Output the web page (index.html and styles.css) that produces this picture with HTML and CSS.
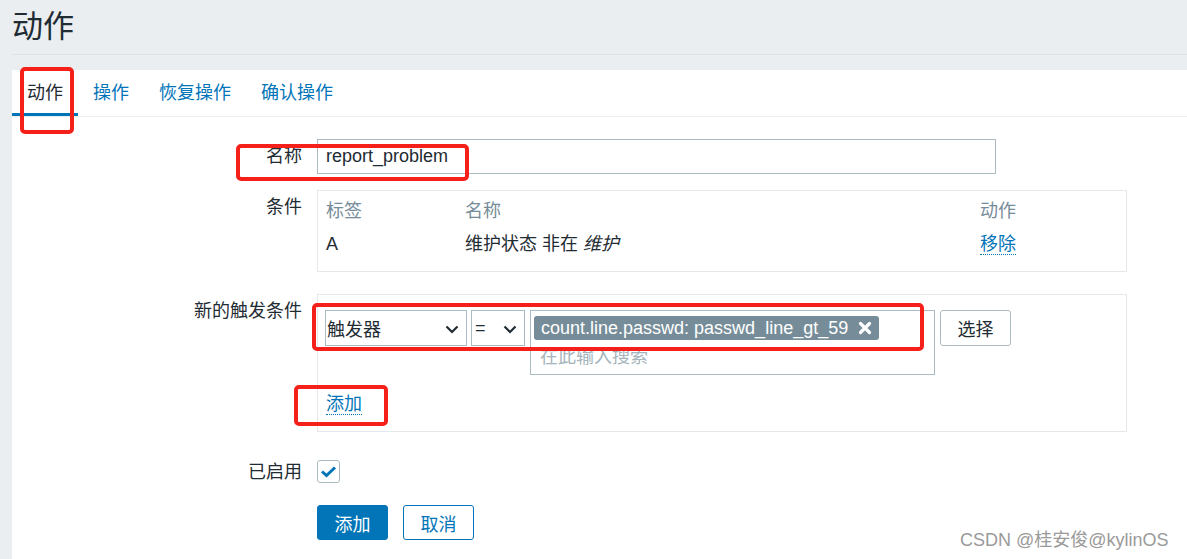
FILE: index.html
```html
<!DOCTYPE html>
<html lang="zh-CN">
<head>
  <meta charset="UTF-8" />
  <title>动作</title>
  <link rel="stylesheet" href="styles.css">
</head>
<body>
  <!-- Header -->
  <header class="page-header">
    <h1>动作</h1>
  </header>

  <!-- Main panel -->
  <main class="panel">
    <ul class="tabs">
      <li class="tab active">动作</li>
      <li class="tab">操作</li>
      <li class="tab">恢复操作</li>
      <li class="tab">确认操作</li>
    </ul>

    <div class="form">
      <div class="row">
        <label class="label">名称</label>
        <div class="field">
          <input class="text-input" type="text" value="report_problem" />
        </div>
      </div>

      <div class="row">
        <label class="label">条件</label>
        <div class="field">
          <div class="box conditions">
            <div class="cond-row head">
              <span class="c1">标签</span>
              <span class="c2">名称</span>
              <span class="c3">动作</span>
            </div>
            <div class="cond-row">
              <span class="c1">A</span>
              <span class="c2">维护状态 非在 <em>维护</em></span>
              <span class="c3"><a class="link">移除</a></span>
            </div>
          </div>
        </div>
      </div>

      <div class="row">
        <label class="label">新的触发条件</label>
        <div class="field">
          <div class="box new-cond">
            <div class="cond-controls">
              <div class="select sel-type">
                <span>触发器</span>
                <svg class="chev" width="14" height="9" viewBox="0 0 14 9"><path d="M1.5 1.5 L7 7 L12.5 1.5" fill="none" stroke="#1f2c33" stroke-width="2.2"/></svg>
              </div>
              <div class="select sel-op">
                <span>=</span>
                <svg class="chev" width="14" height="9" viewBox="0 0 14 9"><path d="M1.5 1.5 L7 7 L12.5 1.5" fill="none" stroke="#1f2c33" stroke-width="2.2"/></svg>
              </div>
              <div class="multiselect">
                <div class="chip">
                  <span>count.line.passwd: passwd_line_gt_59</span>
                  <svg class="chip-x" width="14" height="14" viewBox="0 0 14 14"><path d="M2.5 2.5 L11.5 11.5 M11.5 2.5 L2.5 11.5" stroke="#fff" stroke-width="3.2" stroke-linecap="round"/></svg>
                </div>
                <div class="placeholder">在此输入搜索</div>
              </div>
              <button class="btn-grey">选择</button>
            </div>
            <div class="add-line"><a class="link">添加</a></div>
          </div>
        </div>
      </div>

      <div class="row row-check">
        <label class="label">已启用</label>
        <div class="field">
          <span class="checkbox">
            <svg width="17" height="13" viewBox="0 0 17 13"><path d="M2 6.5 L6.5 10.5 L15 2.5" fill="none" stroke="#0275b8" stroke-width="3"/></svg>
          </span>
        </div>
      </div>

      <div class="row row-buttons">
        <div class="label"></div>
        <div class="field buttons">
          <button class="btn-primary">添加</button>
          <button class="btn-alt">取消</button>
        </div>
      </div>
    </div>
  </main>

  <!-- annotations -->
  <div class="mark mark-tab"></div>
  <div class="mark mark-name"></div>
  <div class="mark mark-cond"></div>
  <div class="mark mark-add"></div>

  <div class="watermark">CSDN @桂安俊@kylinOS</div>
</body>
</html>
```

FILE: styles.css
```css
body {
  margin: 0;
  padding: 0 0 0 12px;
  height: 559px;
  overflow: hidden;
  background-color: #ebeef1;
  font-family: "Liberation Sans", "Noto Sans CJK SC", sans-serif;
  color: #1f2c33;
  font-size: 18px;
  position: relative;
}

.page-header {
  height: 54px;
  border-bottom: 1px solid #dde2e6;
  margin-bottom: 15px;
  width: 1200px;
}

.page-header h1 {
  margin: 0;
  padding-top: 7px;
  font-size: 31px;
  line-height: 40px;
  font-weight: normal;
}

.panel {
  background: #fff;
  width: 1200px;
  height: 500px;
}

.tabs {
  list-style: none;
  margin: 0;
  padding: 0;
  display: flex;
  height: 46px;
  border-bottom: 1px solid #ebeef1;
}

.tab {
  padding: 3px 15px 0;
  line-height: 40px;
  color: #0275b8;
  border-bottom: 3px solid transparent;
}

.tab.active {
  color: #1f2c33;
  border-bottom-color: #0275b8;
}

.form {
  padding-top: 22px;
}

.row {
  display: flex;
  margin-bottom: 16px;
}

.label {
  width: 305px;
  padding-right: 15px;
  box-sizing: border-box;
  text-align: right;
  line-height: 20px;
  padding-top: 7px;
}

.field {
  flex: none;
}

.text-input {
  width: 679px;
  height: 35px;
  box-sizing: border-box;
  border: 1px solid #acbbc2;
  font-family: inherit;
  font-size: 18px;
  color: #1f2c33;
  padding: 0 8px;
  margin: 0;
  outline: none;
}

.box {
  width: 810px;
  box-sizing: border-box;
  border: 1px solid #e4e8eb;
}

.conditions {
  padding: 4px 8px 10px;
}

.cond-row {
  display: flex;
  height: 33px;
  line-height: 33px;
}

.cond-row.head {
  color: #768d99;
}

.c1 { width: 139px; }
.c2 { width: 515px; }
.c3 { flex: 1; }

.link {
  color: #0275b8;
  border-bottom: 1px dotted #0275b8;
  line-height: 20px;
  display: inline-block;
}

.row + .row:nth-child(3) {
  margin-top: 22px;
}

.new-cond {
  padding: 15px 8px 16px 7px;
}

.cond-controls {
  display: flex;
  align-items: flex-start;
}

.select {
  height: 36px;
  box-sizing: border-box;
  border: 1px solid #acbbc2;
  display: flex;
  align-items: center;
  justify-content: space-between;
  padding: 0 7px 0 1px;
}

.sel-type { width: 142px; }
.sel-op { width: 54px; margin-left: 4px; padding-left: 3px; }

.chev { margin-top: 2px; }

.multiselect {
  width: 405px;
  height: 65px;
  box-sizing: border-box;
  border: 1px solid #acbbc2;
  margin-left: 5px;
  padding: 5px 3px 0;
}

.chip {
  display: flex;
  align-items: center;
  justify-content: space-between;
  width: 345px;
  height: 24px;
  box-sizing: border-box;
  background: #768d99;
  color: #fff;
  border-radius: 3px;
  padding: 0 7px;
  line-height: 24px;
}

.placeholder {
  color: #a6b4bc;
  line-height: 20px;
  margin-top: 7px;
  padding-left: 6px;
}

.btn-grey {
  margin-left: 5px;
  width: 71px;
  height: 36px;
  background: #fff;
  border: 1px solid #acbbc2;
  border-radius: 3px;
  font-family: inherit;
  font-size: 18px;
  color: #1f2c33;
  padding: 0;
}

.add-line {
  margin-top: 19px;
  padding-left: 1px;
}

.row-check {
  margin-top: 28px;
  margin-bottom: 22px;
  align-items: center;
}

.row-check .label {
  padding-top: 0;
}

.checkbox {
  display: flex;
  align-items: center;
  justify-content: center;
  width: 23px;
  height: 23px;
  box-sizing: border-box;
  border: 1px solid #acbbc2;
  border-radius: 3px;
}

.buttons {
  display: flex;
  gap: 15px;
}

.btn-primary, .btn-alt {
  width: 71px;
  height: 35px;
  border-radius: 3px;
  font-family: inherit;
  font-size: 18px;
  padding: 0;
}

.btn-primary {
  background: #0275b8;
  border: 1px solid #0275b8;
  color: #fff;
}

.btn-alt {
  background: #fff;
  border: 1px solid #0275b8;
  color: #0275b8;
}

.mark {
  position: absolute;
  border: 4px solid #f5201a;
  border-radius: 5px;
  box-sizing: border-box;
}

.mark-tab { left: 20px; top: 67px; width: 54px; height: 67px; }
.mark-name { left: 236px; top: 144px; width: 233px; height: 37px; }
.mark-cond { left: 312px; top: 303px; width: 612px; height: 48px; }
.mark-add { left: 294px; top: 385px; width: 94px; height: 41px; }

.watermark {
  position: absolute;
  left: 960px;
  top: 529px;
  font-size: 18px;
  line-height: 22px;
  color: #9a9a9a;
}
```
